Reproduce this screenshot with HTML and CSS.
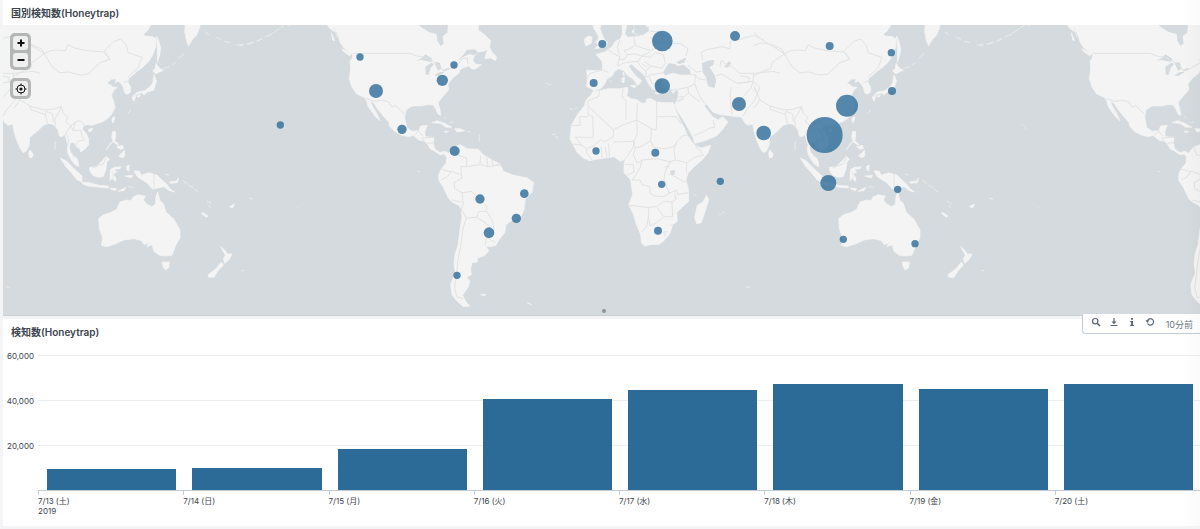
FILE: index.html
```html
<!DOCTYPE html>
<html lang="ja">
<head>
<meta charset="utf-8">
<title>Honeytrap</title>
<link rel="stylesheet" href="styles.css">
</head>
<body>
<main class="dashboard">
  <section class="panel">
    <h2 class="panel-title">国別検知数(Honeytrap)</h2>
    <div class="map">
      <svg class="map-canvas" viewBox="9 75 3591 870" role="img" aria-label="国別検知数の地図">
        <defs>
          <g id="world">
            <!-- Asia and Oceania -->
            <g transform="translate(2220 0)">
              <path class="land" d="M-60 60V340L-40 345 0 348 9 358 14 368 24 376 38 372 42 395 50 420 60 444 70 458 79 453 88 434 89 412 104 400 118 388 130 376 145 371 156 372 165 378 174 390 178 408 186 410 194 403 198 415 203 436 202 452 206 466 214 480 224 493 236 500 235 486 230 474 220 466 211 456 208 440 212 428 222 428 230 440 240 448 242 456 256 446 266 434 266 416 258 400 247 388 250 377 264 374 276 376 290 371 308 365 324 355 336 341 345 322 341 304 334 286 342 270 352 262 338 261 330 254 320 250 334 238 348 236 346 248 354 243 364 252 371 264 374 279 382 283 391 277 392 262 384 247 386 235 398 226 408 216 428 202 444 187 458 166 467 140 468 116 456 110 436 108 430 103 442 92 456 70V60Z"/>
              <path class="land" d="M556 70 554 95 560 125 566 138 576 120 590 105 600 80 598 68ZM470 108 476 122 482 145 480 162 472 188 472 150ZM468 190 480 206 490 211 477 217 468 222 458 213 466 205ZM462 224 470 244 464 258 462 270 442 276 432 285 425 278 408 284 398 290 412 276 434 272 448 262 458 250 460 234ZM396 292 408 288 402 304ZM410 288 422 284 416 292ZM340 350 345 352 340 369 335 360ZM266 388 278 384 274 394 266 395ZM90 450 98 462 96 472 88 472 86 460ZM338 394 347 395 347 412 344 422 356 432 354 436 340 426 335 412ZM350 440 368 436 370 446 360 448ZM356 468 374 450 374 468 366 474ZM318 450 342 420 320 446ZM181 474 198 482 222 506 246 528 246 546 232 540 214 518 196 498ZM246 546 268 548 296 556 324 558 326 564 300 562 264 558 248 552ZM330 564 350 566 346 572 334 568ZM354 574 378 562 372 572ZM268 502 288 500 306 484 318 468 328 478 320 488 318 508 310 530 296 532 278 526 270 514ZM332 508 344 502 364 500 360 506 342 508 350 516 338 522 348 534 346 544 336 534 330 542 330 524ZM380 498 388 496 386 514 380 508ZM374 528 398 526 394 534ZM402 512 418 514 424 526 446 518 472 526 486 540 500 552 510 566 524 576 508 572 492 560 474 564 458 568 440 548 424 538 412 530ZM508 546 528 544 536 534 532 548 512 550Z"/>
              <path class="land" d="M296 656 310 644 332 638 350 628 360 606 380 600 394 602 398 592 414 584 436 588 430 600 440 612 456 620 466 612 468 590 473 576 480 602 490 610 498 636 522 658 540 690 540 714 528 734 516 766 494 768 478 766 462 754 456 734 440 740 446 728 432 734 424 722 402 716 372 720 346 732 320 740 304 736 308 714 298 686ZM486 786 508 786 506 804 496 810 490 802ZM662 740 674 750 682 762 696 762 688 778 674 790 670 776 676 766ZM664 786 670 796 654 812 642 832 626 832 624 824 648 806ZM606 636 624 648 620 652 606 642ZM688 620 704 612 698 624Z"/>
              <path class="island" d="M548 542 560 550M566 556 580 564M584 568 594 576M622 604 634 610M626 616 632 624M750 594 758 598M166 425 165 450M384 340 392 330M490 206 508 200M516 194 526 188M536 176 552 160M616 96 626 104M650 112 662 118M674 124 690 128M710 134 728 138M746 134 760 128M770 124 784 118M18 860 28 862M726 812 730 812M326 434 338 424M496 522 506 526M336 512 340 534M386 560 400 562"/>
              <path class="border" d="M-60 130-40 150 9 155 35 140 64 128 96 134 126 148 133 161 152 152 172 150 196 152 204 134 224 144 260 152 312 156 330 178 300 188 264 222 240 225 206 216 180 218 156 200 133 161 118 172 96 188 92 206 62 216 40 230 9 235M330 178 312 154 342 124 362 117 380 138 384 158 426 172 414 204M133 161 100 140 64 118 40 96 9 100-60 80M9 240 40 254 60 300 90 318 132 330 158 328 184 320 190 340 204 352 196 364 212 378 234 362 244 364 254 376M90 318 92 328 136 344 138 334 158 342 160 366M136 344 142 372M60 300 44 322 20 334 9 342M166 380 164 358 178 334 184 320M212 378 198 398 206 420 202 438M212 378 220 392 242 390 246 408 252 420 232 424 228 436M226 364 220 392M414 204 400 216 384 232M370 248 386 242M462 522V566M9 300 30 290 46 264M318 468 312 490 278 504M218 466 226 472"/>
            </g>
            <!-- The Americas -->
            <g transform="translate(720 0)">
              <path class="land" d="M258 68 268 84 278 92 290 96 296 112 300 126 312 144 330 158 338 166 336 176 330 182 332 205 328 236 336 262 350 282 372 292 380 302 384 318 396 336 408 352 420 362 412 344 404 330 394 312 392 304 402 310 412 326 430 348 446 366 450 380 466 396 486 406 506 410 520 406 536 420 554 424 564 434 570 446 582 452 600 464 614 462 620 472 618 490 604 506 596 524 596 540 610 562 626 596 640 608 656 616 664 626 666 650 660 688 654 736 645 762 642 792 646 820 638 838 632 854 636 884 650 902 670 920 690 918 678 906 668 886 684 862 690 844 680 832 694 824 692 806 696 788 712 786 712 774 736 766 746 752 738 738 752 740 768 736 778 718 794 698 798 674 818 660 840 656 852 630 856 598 876 576 881 548 862 534 822 526 790 514 780 492 756 480 732 466 714 448 682 446 660 434 640 442 626 460 614 454 600 458 584 446 580 430 582 412 556 410 554 396 562 376 542 378 536 392 516 394 500 382 494 352 498 330 516 318 546 318 560 314 580 315 588 328 594 342 602 347 600 328 594 308 610 288 626 270 624 252 636 236 656 220 662 206 686 198 694 206 704 208 724 194 706 192 698 180 704 166 718 156 736 152 748 142 752 122 734 104 714 90 718 68Z"/>
              <path class="land" d="M746 138 734 176 752 174 766 182 770 172 758 158ZM274 98 284 122 278 120ZM306 146 332 160 330 168 310 154ZM576 368 592 362 614 370 636 382 618 382 600 370ZM644 386 660 386 674 392 652 396ZM612 394 626 394 618 398ZM722 884 738 882 734 888ZM862 908 874 914Z"/>
              <path class="water" d="M526 66 544 82 566 96 590 102 592 122 602 138 611 130 608 108 622 98 624 66ZM528 182 546 174 556 163 577 176 574 186 556 182 544 180ZM574 188 582 192 572 204 566 224 557 224 556 200ZM582 186 600 188 604 206 594 212 588 198ZM582 226 600 216 614 216 596 228ZM608 210 626 203 628 208 614 214ZM680 150 704 148 716 158 700 166 690 162 670 170 652 184 672 162Z"/>
              <path class="border" d="M338 160H510L530 168 556 172 580 184 604 204 610 214 630 206 658 190 666 176 682 174 684 194M378 295 402 304 430 301 446 306 456 322 468 316 480 330 494 342M526 404 536 392 540 400 550 408M552 424 546 414 580 412M560 430 582 428M640 440 650 464 680 474 680 500 662 500 666 534 642 548 644 566 666 578 694 574 706 586 722 600 740 618 740 634 716 634 710 652 732 666 750 680 752 700 738 718 736 736M602 506 624 514 634 514 662 524M604 540 622 530 634 514M666 578 670 612 664 626 678 654 668 690 662 740 654 780 650 820 644 860 650 890 668 896M678 654 710 652M740 634 758 664 762 690 744 714 766 728M680 500 720 494 722 468M722 494 744 500 740 472M756 480 760 498 778 492M744 500 784 494M636 600 664 606"/>
              <path class="island" d="M0 134 10 133M20 132 40 126M52 122 66 116M76 110 96 102M100 98 118 86M122 84 132 76M144 78 150 74M134 383 138 386M532 513 538 515M614 350 618 356M630 368 640 366M684 394 690 396M718 405 718 425M30 595 34 596M174 622 175 623M6 811 8 812M282 84 292 112M124 372 128 376"/>
            </g>
            <!-- Europe, Africa and the Middle East -->
            <g transform="translate(1620 60)">
              <path class="land" d="M324 8 328 34 308 46 286 50 264 52 254 42 262 10H246L247 44 240 58 226 64 216 80 204 88 196 96 184 98 168 104 176 112 186 124 188 150 164 152 140 150 142 176 140 200 150 204 160 211 182 206 194 192 200 178 218 166 222 156 236 146 252 152 262 166 280 178 292 196 300 190 305 182 290 170 276 154 266 138 274 132 292 148 312 164 320 180 328 196 340 210 346 208 342 192 350 176 366 174 368 200 384 204 398 208 410 206 416 216 412 240 404 254 414 276 430 300 446 328 460 354 464 370 490 364 516 354 532 346 550 326 564 306 548 290 534 300 518 290 502 270 492 256 500 252 518 276 540 284 560 286 590 290 640 292V8Z"/>
              <path class="land" d="M162 8 160 22 168 36 176 50 174 60 166 66 176 74 164 86 180 84 200 80 202 66 194 60 186 42 180 26 184 8ZM134 56 146 48 156 52 154 70 138 78 134 68ZM272 6 286 20 276 36 292 44 300 26 322 20 330 6ZM270 196 288 196 284 204ZM246 174 254 172 252 188 246 186ZM248 158 252 156 252 168ZM344 218 366 220 350 222ZM394 214 408 210 400 220Z"/>
              <path class="land" d="M160 212 180 212 204 206 240 206 262 202 264 216 260 226 272 236 288 238 306 250 318 248 320 236 334 236 350 246 376 248 400 248 408 272 420 300 432 322 442 346 456 366 468 378 484 384 512 376 504 398 486 420 462 440 444 460 438 478 446 512 446 544 428 560 410 578 412 604 398 614 390 640 372 662 356 674 330 674 314 679 304 668 302 644 288 610 280 582 266 554 278 524 272 480 252 458 252 432 256 418 240 424 222 410 196 414 168 418 148 422 130 414 112 398 98 372 90 356 94 316 112 284 134 256 138 240 154 224ZM500 526 506 540 496 572 484 608 470 612 464 592 472 556 488 546ZM688 392 700 402 696 412 688 412Z"/>
              <path class="water" d="M376 166 370 156 386 130 404 132 414 138 430 134 450 150 452 164 420 164 400 158ZM410 126 440 112 432 128 416 132ZM486 130 504 122 522 120 520 134 508 142 522 162 528 180 524 204 504 198 498 172 488 156ZM552 142 566 124 574 130 564 142ZM390 452 404 450 404 464 392 464ZM374 480 380 500 376 496ZM404 510 408 540 404 530ZM284 6 282 40 300 44 320 24 312 6Z"/>
              <path class="border" d="M142 176 150 160 188 150 206 158M204 88 222 102 240 110 236 122 232 138 254 128 272 126M240 60 232 80 238 104M282 52 286 76 270 86 252 92 262 104 254 118 236 118M286 76 306 84 332 92 344 84 344 64 380 72 420 70 444 86 438 108M262 104 284 102 306 108 330 96M272 126 294 124 306 108 330 112 346 98 370 104 376 130 366 144 332 138 312 124M294 124 300 138 318 154 332 138M318 154 318 172 334 164 370 158 376 166M304 130 320 142M338 194 326 168M444 136 470 156 484 154M450 164 466 164 474 176 498 180M466 164 464 192 444 202 414 208M464 192 480 230 494 250M444 202 446 220 412 244M446 220 480 246M412 244 430 238 426 228 412 232M488 118 484 96 504 88 546 80 570 86 570 64 600 58 640 46 672 60M540 140 544 120 556 132 580 142 598 160 640 160 700 154M526 168 544 162 580 184 592 190 626 186 628 172 600 168M574 200 570 224 576 284M592 190 640 184 632 206 600 240 574 250M640 184 660 202 642 244 620 270 608 290M462 346 490 336 510 324 524 322 520 300M144 258 144 242 176 230 178 212M158 290 144 284V258L220 330 250 314 290 300 292 250M158 290 160 352H106M94 316H120V290H144M250 206 246 228 258 244 258 300M350 246V308L348 330 334 326 290 300M350 290H408L424 312M220 330 220 350 192 366 184 358 160 378 140 386 140 398M106 352 126 376 100 372M126 376 140 386M140 398 156 420M196 380 200 412M184 380 186 414M206 370 208 410M220 366 282 364 280 380 262 410 254 418M290 300 292 340 282 364 286 384 306 378 332 362 334 326M332 362 340 382 376 386 400 380 410 366 430 346 442 346M286 384 280 406 292 430 306 420 354 416 390 426 406 420 402 388 410 366M406 420 440 428 468 410 490 406 480 390 466 380M440 428V460M256 434H280L282 456 260 466M306 420 300 444 284 470 276 480M276 480H300L306 494 330 500V520L344 528 370 530 388 520 380 500 372 478 374 460 390 426M390 462 430 484 440 486M388 520 410 510 412 524 444 518M268 556 320 562 350 560 370 544 396 546 412 534M326 562 326 586 320 620 304 636M326 592 330 618 350 608 372 590 350 562M372 590 398 590 396 546M390 616 398 614M368 638 378 634 374 648M700 154 720 160M640 160 640 184M330 52 344 64M330 34 360 36 370 60M374 440 388 440"/>
              <path class="island" d="M210 183 214 184M90 267 98 268M106 266 112 262M38 344 46 342M46 350 54 354M538 582 542 583M548 578 552 577M18 190 32 194M527 371 530 372M236 450 237 450M244 428 246 430M462 524 468 526"/>
            </g>
          </g>
        </defs>
        <use href="#world" x="-2220"/>
        <use href="#world"/>
        <use href="#world" x="2220"/>
        <g class="markers">
          <g transform="translate(720 0)">
            <circle cx="360" cy="171" r="11"/><circle cx="642" cy="195" r="11"/><circle cx="607" cy="241" r="17"/>
            <circle cx="408" cy="273" r="21"/><circle cx="121" cy="375" r="11"/><circle cx="486" cy="388" r="14"/>
            <circle cx="644" cy="453" r="15"/><circle cx="720" cy="597" r="14"/><circle cx="853" cy="581" r="13"/>
            <circle cx="829" cy="655" r="14"/><circle cx="747" cy="698" r="16"/><circle cx="651" cy="826" r="11"/>
          </g>
          <g transform="translate(1620 60)">
            <circle cx="187" cy="72" r="12"/><circle cx="367" cy="63" r="31"/><circle cx="585" cy="48" r="15"/>
            <circle cx="161" cy="189" r="12"/><circle cx="367" cy="198" r="23"/><circle cx="597" cy="252" r="21"/>
            <circle cx="671" cy="339" r="22"/><circle cx="168" cy="393" r="11"/><circle cx="346" cy="398" r="12"/>
            <circle cx="365" cy="493" r="11"/><circle cx="541" cy="484" r="11"/><circle cx="354" cy="632" r="12"/>
          </g>
          <g transform="translate(2280 60)">
            <circle cx="209" cy="78" r="12"/><circle cx="394" cy="98" r="11"/><circle cx="396" cy="213" r="12"/>
            <circle cx="261" cy="257" r="33"/><circle cx="194" cy="345" r="54"/><circle cx="205" cy="489" r="24"/>
            <circle cx="413" cy="508" r="11"/><circle cx="250" cy="658" r="11"/><circle cx="465" cy="671" r="11"/>
          </g>
        </g>
      </svg>
      <div class="map-controls">
        <div class="control-group">
          <button class="map-button" type="button" aria-label="拡大"><svg viewBox="0 0 14 14"><path d="M7 3.500v7M3.500 7h7"/></svg></button>
          <button class="map-button" type="button" aria-label="縮小"><svg viewBox="0 0 14 14"><path d="M3.500 7h7"/></svg></button>
        </div>
        <div class="control-group">
          <button class="map-button locate" type="button" aria-label="位置をリセット"><svg viewBox="0 0 14 14"><circle cx="7" cy="7" r="4"/><path d="M7 1.500v2M7 10.500v2M1.500 7h2M10.500 7h2"/><circle class="dot" cx="7" cy="7" r="1.600"/></svg></button>
        </div>
      </div>
      <span class="resize-handle"></span>
    </div>
  </section>

  <section class="panel chart-panel">
    <h2 class="panel-title">検知数(Honeytrap)</h2>
    <div class="toolbar">
      <button class="tool" type="button" aria-label="サーチで開く"><svg viewBox="0 0 10 10"><circle cx="4.200" cy="4.200" r="2.700"/><path d="M6.200 6.200 9 9" stroke-width="1.600"/></svg></button>
      <button class="tool" type="button" aria-label="エクスポート"><svg viewBox="0 0 10 10"><path d="M5 1v5M1.500 8.500h7"/><path class="solid" d="M2.500 4.500h5L5 7.200z"/></svg></button>
      <button class="tool" type="button" aria-label="調査"><svg viewBox="0 0 10 10"><path class="solid" d="M4 1h2v1.800H4zM3.300 4H6v3.700h.9V9H3.200V7.700h.9V5.200h-.8z"/></svg></button>
      <button class="tool" type="button" aria-label="更新"><svg viewBox="0 0 10 10"><path d="M2.600 6.500A3.200 3.200 0 1 0 2.400 3.700"/><path class="solid" d="M.4 3.300h4L2.300 6z"/></svg></button>
      <span class="updated">10分前</span>
    </div>
    <div class="chart">
      <div class="y-axis"><span>60,000</span><span>40,000</span><span>20,000</span></div>
      <div class="plot">
        <div class="bars">
          <div class="slot"><div class="bar" style="height:15.400%"></div></div>
          <div class="slot"><div class="bar" style="height:16%"></div></div>
          <div class="slot"><div class="bar" style="height:30.500%"></div></div>
          <div class="slot"><div class="bar" style="height:67.500%"></div></div>
          <div class="slot"><div class="bar" style="height:74%"></div></div>
          <div class="slot"><div class="bar" style="height:78.200%"></div></div>
          <div class="slot"><div class="bar" style="height:74.600%"></div></div>
          <div class="slot"><div class="bar" style="height:78.800%"></div></div>
        </div>
        <div class="x-axis">
          <span>7/13 (土)<br>2019</span><span>7/14 (日)</span><span>7/15 (月)</span><span>7/16 (火)</span><span>7/17 (水)</span><span>7/18 (木)</span><span>7/19 (金)</span><span>7/20 (土)</span>
        </div>
      </div>
    </div>
  </section>
</main>
</body>
</html>
```
FILE: styles.css
```css
* { box-sizing: border-box; }

body {
  margin: 0;
  background: #f2f4f5;
  color: #3c444d;
  font-family: Inter, "Noto Sans CJK JP", sans-serif;
}

.dashboard {
  position: relative;
  display: flex;
  flex-direction: column;
  gap: 3px;
  padding-left: 3px;
  overflow: hidden;
}

/* soft shade along the window edge */
.dashboard::after {
  content: "";
  position: absolute;
  top: 0;
  right: 0;
  bottom: 0;
  width: 16px;
  background: linear-gradient(to right, rgba(0, 0, 0, 0), rgba(0, 0, 0, .02));
  pointer-events: none;
}

.panel {
  position: relative;
  background: #fff;
}

.panel-title {
  margin: 0;
  padding: 1px 0 0 8px;
  font-size: 10px;
  font-weight: 600;
  line-height: 24px;
}

.map {
  position: relative;
  background: #d4dadd;
  border-bottom: 1px solid #c8d0d5;
}

.map-canvas { display: block; width: 100%; }

.land { fill: #f4f4f4; stroke: #f4f4f4; stroke-width: 2; stroke-linejoin: round; }
.water { fill: #d4dadd; }
.border { fill: none; stroke: #e1e2e3; stroke-width: 3; stroke-linejoin: round; }
.island { fill: none; stroke: #e9ebec; stroke-width: 3; stroke-linecap: round; }
.markers { fill: #2c6b98; fill-opacity: .8; }

.map-controls {
  position: absolute;
  top: 8px;
  left: 7px;
  display: flex;
  flex-direction: column;
  gap: 8px;
}

.control-group {
  display: flex;
  flex-direction: column;
  gap: 3px;
  padding: 3px;
  border-radius: 5px;
  background: #b5b6b6;
}

.map-button {
  width: 15px;
  height: 14px;
  padding: 0;
  border: 0;
  border-radius: 3px;
  background: #efefef;
}

.map-button svg {
  display: block;
  width: 14px;
  height: 14px;
  margin: 0 auto;
  fill: none;
  stroke: #111;
  stroke-width: 2;
}

.locate { height: 15px; }
.locate svg { stroke-width: 1; }
.locate .dot { fill: #111; stroke: none; }

.resize-handle {
  position: absolute;
  bottom: 2px;
  left: 50%;
  width: 4px;
  height: 4px;
  border-radius: 50%;
  background: #8d959a;
}

.toolbar {
  position: absolute;
  top: -5px;
  right: 0;
  display: flex;
  align-items: center;
  gap: 8px;
  height: 20px;
  padding: 0 7px 0 8px;
  border: 1px solid #c3cbd4;
  border-width: 0 0 1px 1px;
  border-bottom-left-radius: 4px;
  background: #fff;
}

.tool {
  width: 10px;
  height: 14px;
  padding: 0 0 4px;
  border: 0;
  background: none;
}

.tool svg {
  display: block;
  width: 10px;
  height: 10px;
  fill: none;
  stroke: #5c6773;
  stroke-width: 1.2;
}

.tool .solid { fill: #5c6773; stroke: none; }

.updated {
  padding: 3px 0 0 3px;
  color: #6b7785;
  font-size: 9px;
  line-height: 16px;
}

.chart {
  display: flex;
  padding: 11px 0 10px;
  font-size: 8px;
}

.y-axis {
  width: 35px;
  padding-right: 4px;
  text-align: right;
}

.y-axis span {
  display: block;
  height: 45px;
  margin-top: -5px;
  margin-bottom: 5px;
  line-height: 12px;
}

.plot { flex: 1; }

.bars {
  display: grid;
  grid-template-columns: repeat(8, 1fr);
  height: 136px;
  border-bottom: 1px solid #c3cbd4;
  background: repeating-linear-gradient(#ebeef0 0 1px, transparent 1px 45px);
}

.slot {
  display: flex;
  align-items: flex-end;
  padding: 0 7px 0 9px;
}

.bar { width: 100%; background: #2c6b98; }

.x-axis {
  display: grid;
  grid-template-columns: repeat(8, 1fr);
  line-height: 10px;
}

.x-axis span {
  padding-top: 5px;
  background: linear-gradient(#c3cbd4, #c3cbd4) no-repeat 0 0 / 1px 4px;
}
```
